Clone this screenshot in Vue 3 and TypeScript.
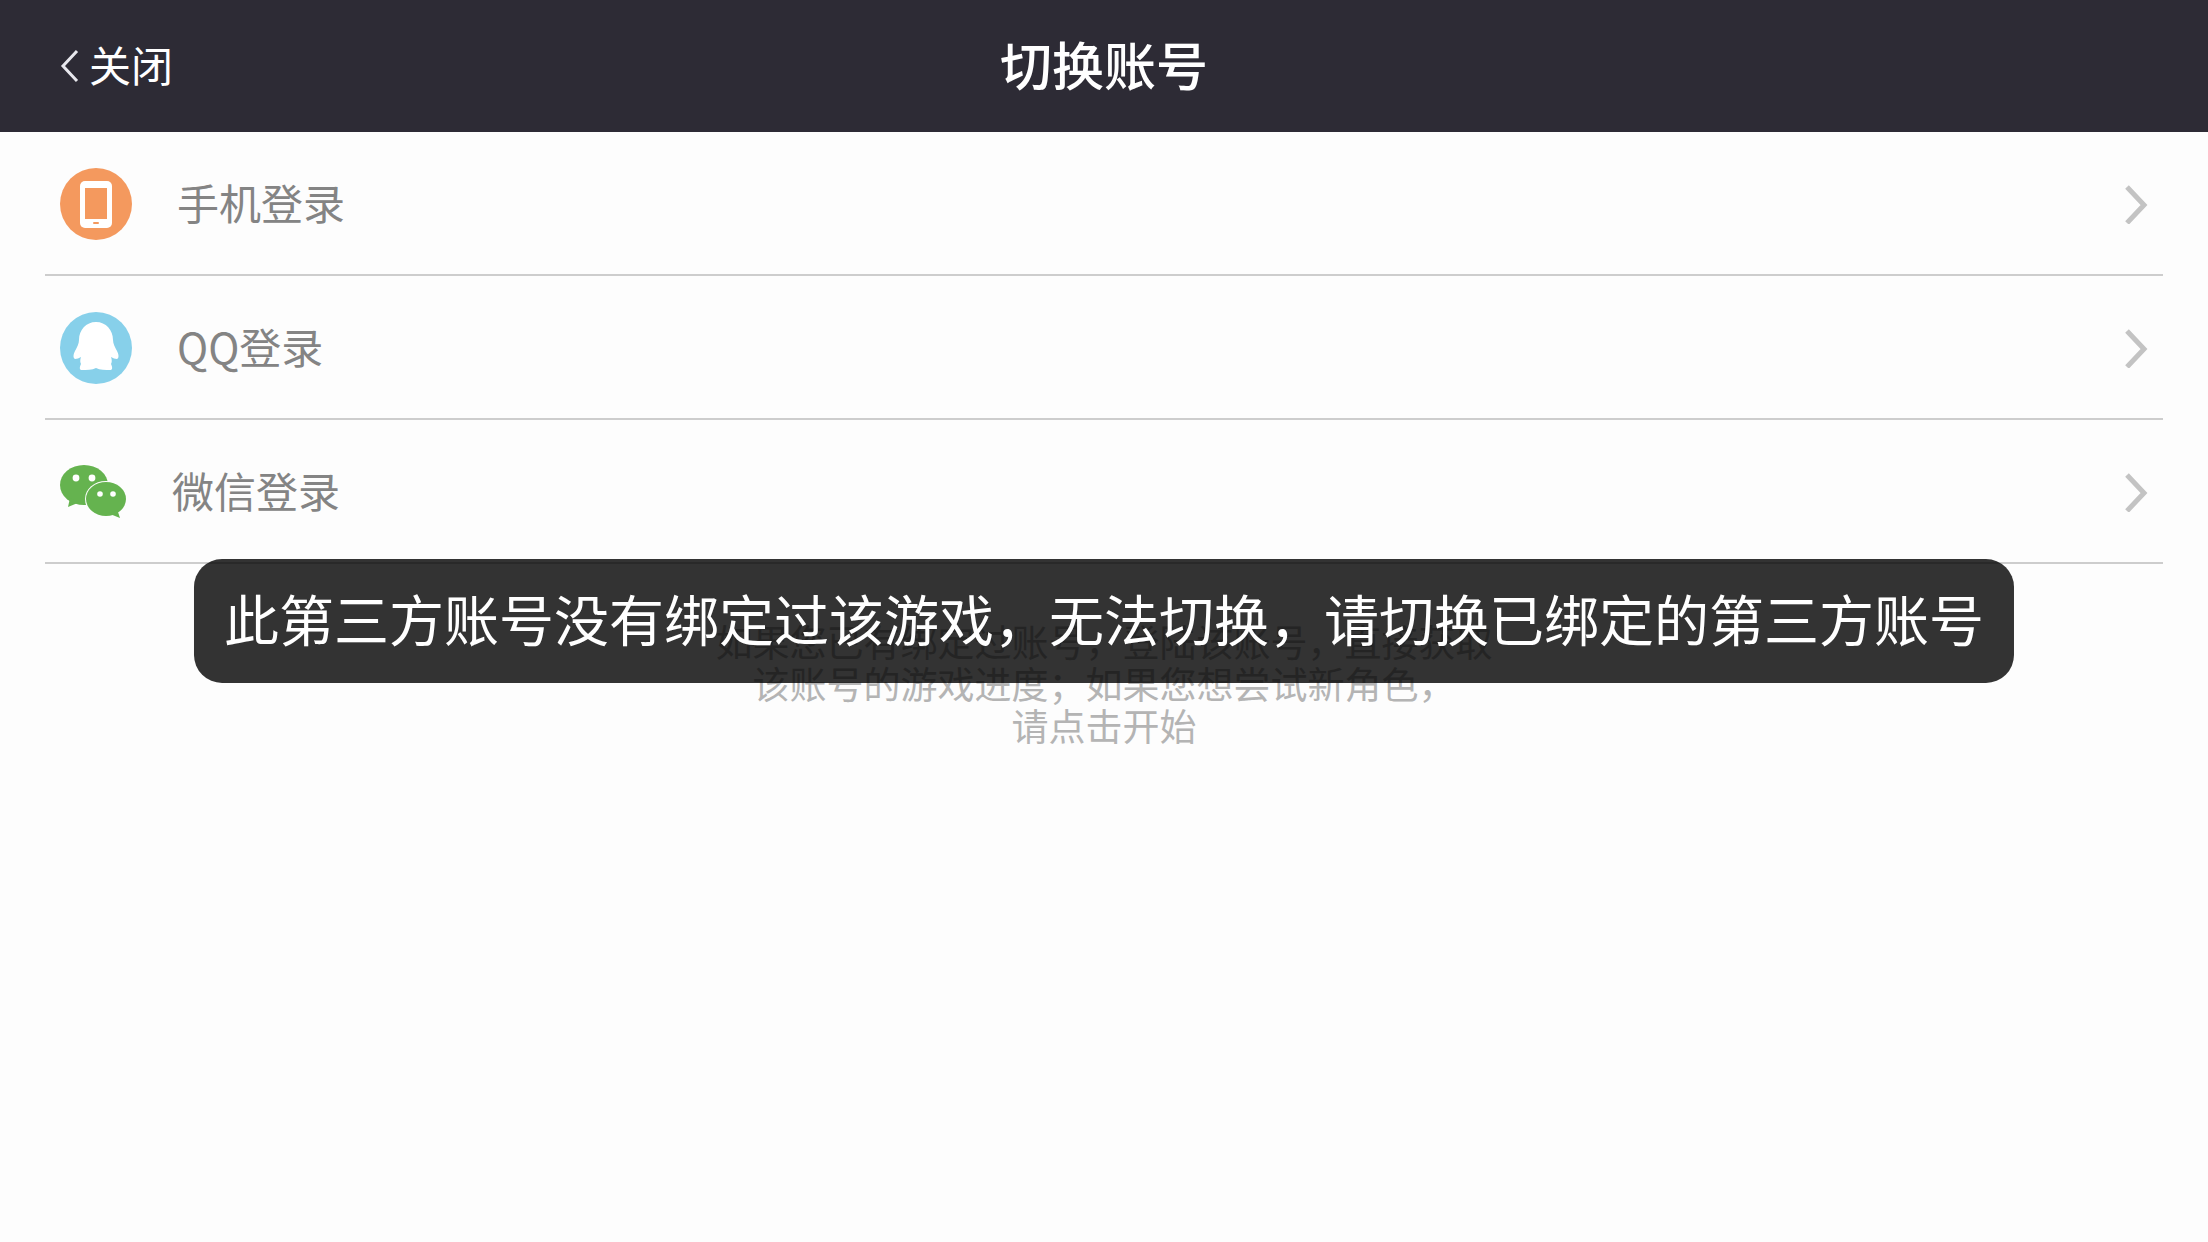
<script setup lang="ts">
import { ref } from 'vue'

type Provider = 'phone' | 'qq' | 'wechat'

interface LoginOption {
  id: Provider
  label: string
}

const options: LoginOption[] = [
  { id: 'phone', label: '手机登录' },
  { id: 'qq', label: 'QQ登录' },
  { id: 'wechat', label: '微信登录' },
]

const hintLines: string[] = [
  '如果您已有绑定过账号，登陆该账号，直接获取',
  '该账号的游戏进度；如果您想尝试新角色，',
  '请点击开始',
]

const toast = ref<string>('此第三方账号没有绑定过该游戏，无法切换，请切换已绑定的第三方账号')
</script>

<template>
  <div class="page">
    <header class="bar">
      <button class="close" type="button">
        <svg class="back" viewBox="0 0 20 34" aria-hidden="true">
          <path d="M17 2 L3 17 L17 32" />
        </svg>
        <span class="close-text">关闭</span>
      </button>
      <h1 class="title">切换账号</h1>
    </header>

    <main class="content">
      <ul class="options">
        <li v-for="option in options" :key="option.id" class="item">
          <button class="option" type="button">
            <svg v-if="option.id === 'phone'" class="icon" viewBox="0 0 72 72" aria-hidden="true">
              <circle cx="36" cy="36" r="36" fill="#f4995e" />
              <rect x="20" y="13" width="32" height="47" rx="5" fill="#fff" />
              <rect x="25" y="20" width="22" height="31" fill="#f4995e" />
              <rect x="33" y="54" width="6" height="2" rx="1" fill="#f4995e" />
            </svg>
            <svg v-else-if="option.id === 'qq'" class="icon" viewBox="0 0 72 72" aria-hidden="true">
              <circle cx="36" cy="36" r="36" fill="#87d0ea" />
              <path
                fill="#fff"
                d="M36 10 C26 10 19 18 19 28 C19 32 17 35 15 39 C13 43 13 46 15 47 C17 47 19 46 21 45 C20 48 20 50 21 52 C20 54 19 57 21 58 C27 58 32 58 36 56 C40 58 45 58 51 58 C53 57 52 54 51 52 C52 50 52 48 51 45 C53 46 55 47 57 47 C59 46 59 43 57 39 C55 35 53 32 53 28 C53 18 46 10 36 10 Z"
              />
            </svg>
            <svg v-else class="icon icon-wechat" viewBox="0 0 67 54" aria-hidden="true">
              <g fill="#65b34f">
                <ellipse cx="24" cy="20" rx="24" ry="20" />
                <path d="M10 33 L8 42 L20 37 Z" />
              </g>
              <ellipse cx="46" cy="34" rx="21" ry="18" fill="#fdfdfd" />
              <g fill="#65b34f">
                <ellipse cx="46" cy="34" rx="20" ry="17" />
                <path d="M50 49 L60 53 L57 44 Z" />
              </g>
              <g fill="#fff">
                <circle cx="16" cy="13" r="3.4" />
                <circle cx="32" cy="13" r="3.4" />
                <circle cx="40" cy="29" r="2.8" />
                <circle cx="53" cy="29" r="2.8" />
              </g>
            </svg>
            <span class="label">{{ option.label }}</span>
            <svg class="arrow" viewBox="0 0 24 40" aria-hidden="true">
              <path d="M3 3 L20 21 L3 39" />
            </svg>
          </button>
        </li>
      </ul>

      <p class="hint">
        <span v-for="line in hintLines" :key="line" class="hint-line">{{ line }}</span>
      </p>
    </main>

    <div v-if="toast" class="toast" role="status">{{ toast }}</div>
  </div>
</template>

<style>
body {
  margin: 0;
  background: #fdfdfd;
}
</style>

<style scoped>
.page {
  position: relative;
  min-height: 100vh;
  background: #fdfdfd;
  font-family: 'Noto Sans CJK SC', 'Noto Sans', sans-serif;
}

button {
  margin: 0;
  border: 0;
  background: none;
  font: inherit;
  color: inherit;
  cursor: pointer;
}

.bar {
  display: grid;
  grid-template-columns: 1fr auto 1fr;
  align-items: center;
  height: 132px;
  padding: 0 60px;
  background: #2d2b35;
  color: #fff;
}

.close {
  display: flex;
  align-items: center;
  justify-self: start;
  gap: 9px;
  padding: 0;
}

.close-text {
  padding-bottom: 4px;
  font-size: 42px;
  line-height: 60px;
}

.back {
  width: 20px;
  height: 34px;
  fill: none;
  stroke: #e8e8ee;
  stroke-width: 3;
}

.title {
  margin: 0;
  padding-bottom: 4px;
  font-size: 52px;
  line-height: 72px;
  font-weight: 500;
}

.options {
  margin: 0;
  padding: 0 45px;
  list-style: none;
}

.item {
  border-bottom: 2px solid #cdcdcd;
}

.option {
  display: flex;
  align-items: center;
  gap: 45px;
  width: 100%;
  height: 142px;
  padding: 2px 15px 0;
  text-align: left;
}

.icon {
  flex: none;
  width: 72px;
  height: 72px;
}

.icon-wechat {
  width: 67px;
  height: 54px;
}

.label {
  flex: 1;
  padding-bottom: 4px;
  color: #848484;
  font-size: 42px;
  line-height: 60px;
}

.arrow {
  width: 24px;
  height: 40px;
  fill: none;
  stroke: #c3c3c3;
  stroke-width: 5;
}

.hint {
  display: flex;
  flex-direction: column;
  align-items: center;
  margin: 56px 0 0;
  color: #b4b4b4;
  font-size: 37px;
  line-height: 42px;
}

.toast {
  position: absolute;
  top: 50%;
  left: 50%;
  transform: translate(-50%, -50%);
  padding: 18px 30px 26px;
  border-radius: 28px;
  background: rgba(0, 0, 0, 0.8);
  color: #fff;
  font-size: 55px;
  line-height: 80px;
  white-space: nowrap;
}
</style>
